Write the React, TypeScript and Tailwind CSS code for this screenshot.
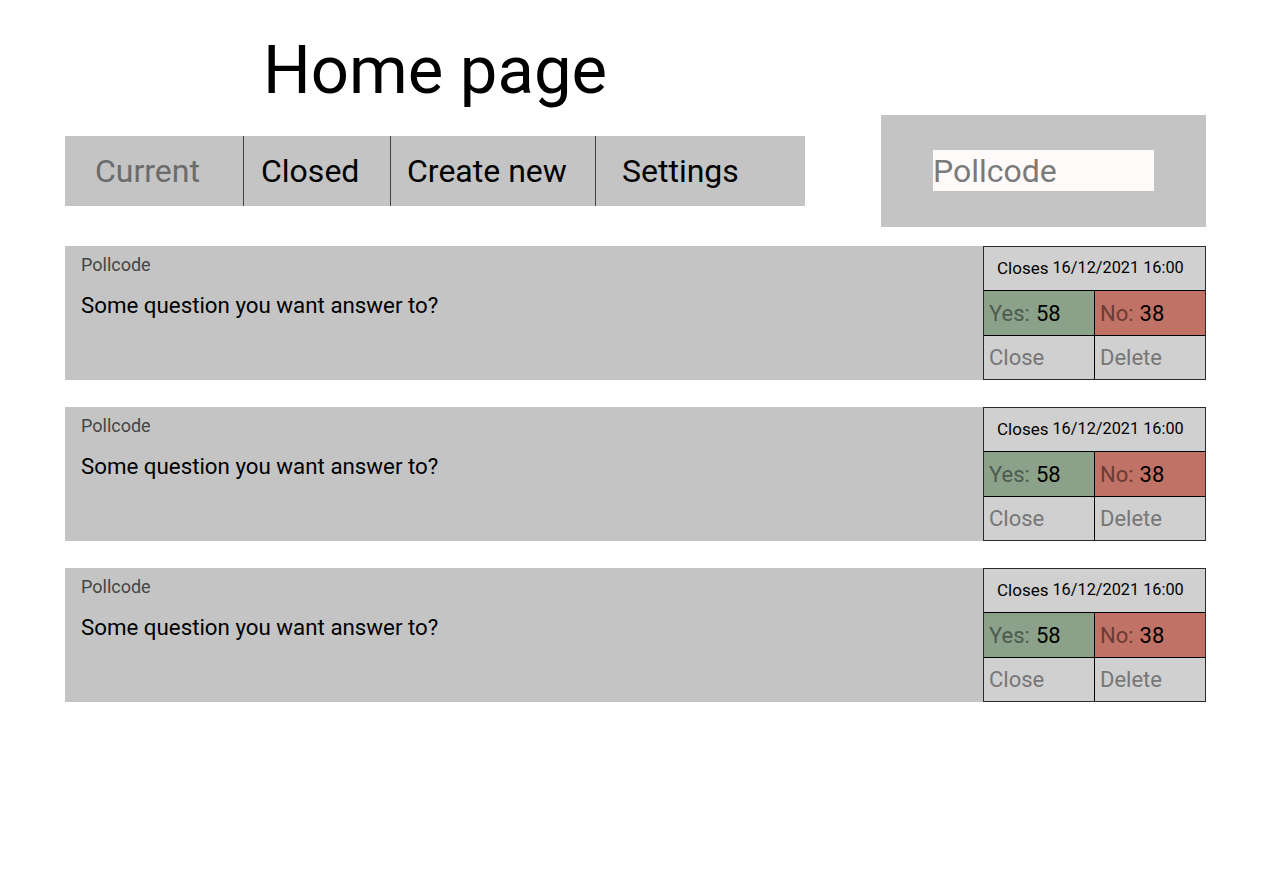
const polls = [1, 2, 3];

function PollCard() {
  return (
    <div className="flex h-[134px]">
      <div className="flex-1 bg-[#c4c4c4] px-4 pt-[9px]">
        <div className="text-[18px] leading-[20px] text-[#444]">Pollcode</div>
        <div className="mt-[17px] text-[22.3px] leading-[26px] text-black">
          Some question you want answer to?
        </div>
      </div>
      <div className="flex w-[223px] flex-col border border-[#2b2b2b]">
        <div className="flex h-[44px] items-center border-b border-black bg-[#d0d0d0] pl-[13px] text-black">
          <span className="text-[17px]">Closes</span>
          <span className="ml-[4px] text-[16.3px]">16/12/2021 16:00</span>
        </div>
        <div className="flex h-[45px] border-b border-black text-[22px]">
          <div className="flex w-[111px] items-center border-r border-black bg-[#8ba18a] pl-[5px]">
            <span className="text-[#4f5a4f]">Yes:</span>
            <span className="ml-[6px] text-black">58</span>
          </div>
          <div className="flex flex-1 items-center bg-[#c07266] pl-[5px]">
            <span className="text-[#6b3c35]">No:</span>
            <span className="ml-[6px] text-black">38</span>
          </div>
        </div>
        <div className="flex flex-1 bg-[#d0d0d0] text-[22px] text-[#777]">
          <div className="flex w-[111px] items-center border-r border-black pl-[5px]">Close</div>
          <div className="flex flex-1 items-center pl-[5px]">Delete</div>
        </div>
      </div>
    </div>
  );
}

export default function App() {
  return (
    <div className="min-h-screen w-[1269px] bg-white pl-[65px] pr-[63px] font-['Roboto',sans-serif]">
      <div className="flex justify-between">
        <div className="w-[740px]">
          <h1 className="mt-[37px] h-[67px] text-center text-[67px] leading-none font-normal text-black">
            Home page
          </h1>
          <nav className="mt-[32px] flex h-[70px] bg-[#c4c4c4] text-[32px]">
            <div className="flex w-[178px] items-center pl-[30px] text-[#6b6b6b]">Current</div>
            <div className="flex w-[147px] items-center border-l border-[#444] pl-[17px] text-black">Closed</div>
            <div className="flex w-[205px] items-center border-l border-[#444] pl-[16px] text-black">Create new</div>
            <div className="flex flex-1 items-center border-l border-[#444] pl-[26px] text-black">Settings</div>
          </nav>
        </div>
        <div className="mt-[115px] h-[112px] w-[325px] bg-[#c4c4c4] pl-[52px] pt-[35px]">
          <input
            className="h-[41px] w-[221px] bg-[#fffafa] text-[32px] text-black outline-none placeholder:text-[#7a7a7a]"
            placeholder="Pollcode"
          />
        </div>
      </div>
      <div className="mt-[19px] flex flex-col gap-[27px]">
        {polls.map((p) => (
          <PollCard key={p} />
        ))}
      </div>
    </div>
  );
}
